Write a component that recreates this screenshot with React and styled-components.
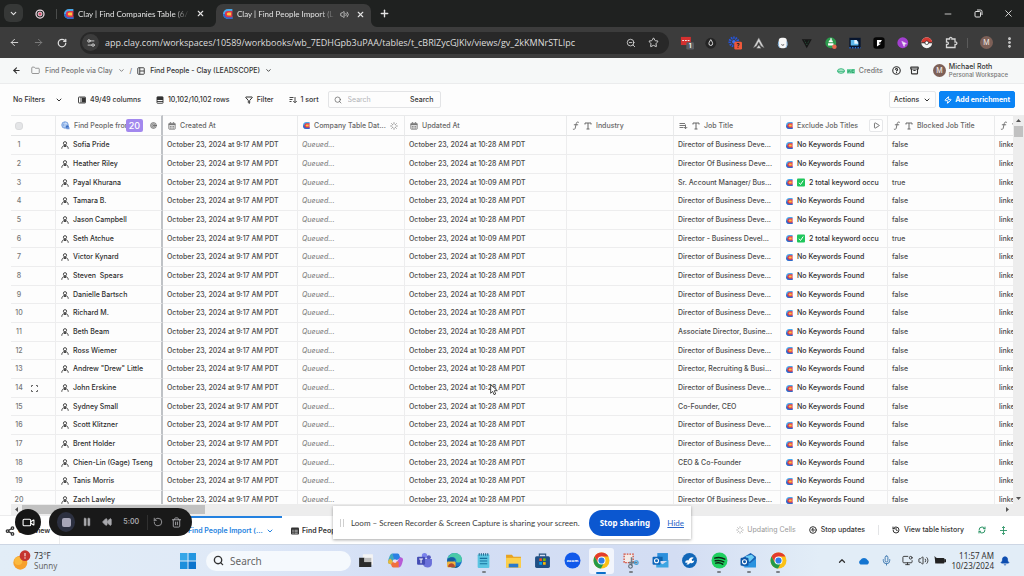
import React from 'react';
import styled, { createGlobalStyle, css } from 'styled-components';
import {
  Archive,
  ArrowLeft,
  ArrowRight,
  Bell,
  ChevronDown,
  ChevronUp,
  CircleHelp,
  CircleStop,
  EllipsisVertical,
  Filter,
  Folder,
  History,
  Loader,
  Mic,
  Minus,
  MonitorDot,
  Pause,
  Play,
  Plus,
  RefreshCw,
  Rewind,
  RotateCcw,
  RotateCw,
  Search,
  Settings2,
  Share2,
  Star,
  Target,
  Trash2,
  Video,
  Volume2,
  X,
  Zap,
  ZoomOut
} from 'lucide-react';

const people = [
  'Sofia Pride',
  'Heather Riley',
  'Payal Khurana',
  'Tamara B.',
  'Jason Campbell',
  'Seth Atchue',
  'Victor Kynard',
  'Steven  Spears',
  'Danielle Bartsch',
  'Richard M.',
  'Beth Beam',
  'Ross Wiemer',
  'Andrew "Drew" Little',
  'John Erskine',
  'Sydney Small',
  'Scott Klitzner',
  'Brent Holder',
  'Chien-Lin (Gage) Tseng',
  'Tanis Morris',
  'Zach Lawley'
];

const jobTitles = {
  1: 'Director Of Business Deve...',
  2: 'Sr. Account Manager/ Bus...',
  5: 'Director - Business Devel...',
  10: 'Associate Director, Busine...',
  12: 'Director, Recruiting & Busi...',
  14: 'Co-Founder, CEO',
  17: 'CEO & Co-Founder',
  19: 'Director Of Business Deve...'
};

const matched = [2, 5];

const rows = people.map((name, i) => ({
  name,
  created: 'October 23, 2024 at 9:17 AM PDT',
  updated: `October 23, 2024 at ${matched.includes(i) ? '10:09' : '10:28'} AM PDT`,
  title: jobTitles[i] || 'Director of Business Deve...',
  matched: matched.includes(i)
}));

const columnWidths = [45, 107, 135, 107, 162, 107, 107, 107, 107, 107];

/* ---------- drawings ---------- */

const ClayLogo = ({ size = 7 }) => (
  <svg width={size} height={size} viewBox="0 0 16 16" aria-hidden="true">
    <path d="M15 0H8a8 8 0 0 0 0 16h7v-4H8V4h7z" fill="#4aa9ea" />
    <path d="M8 16A8 8 0 0 1 0 8h4l4 4h7v4z" fill="#3267c9" />
    <path d="M15 3H8a5 5 0 0 0 0 10h7z" fill="#dc3550" />
    <path d="M13 5.500H8.500a2.500 2.500 0 0 0 0 5H13z" fill="#ffc53a" />
  </svg>
);

const CalendarIcon = () => (
  <svg width="8" height="8" viewBox="0 0 16 16" fill="none" stroke="#777" strokeWidth="1.500">
    <rect x="1.500" y="2.500" width="13" height="12" rx="1.500" fill="#dcdcdc" />
    <path d="M1.500 4.500h13" strokeWidth="3" />
    <path d="M5 0v3M11 0v3M4 9h2M7 9h2M10 9h2M4 12h2M7 12h2M10 12h2" />
  </svg>
);

const FormulaIcon = () => (
  <svg width="8" height="9" viewBox="0 0 16 18" fill="none" stroke="currentColor" strokeWidth="1.800" strokeLinecap="round">
    <path d="M13 2.500c-2.500-1.500-4 0-4.500 2.500L6.500 14c-.5 2.500-2 3.500-4 2.500M4.500 7.500h7" />
  </svg>
);

const TypeIcon = () => (
  <svg width="8" height="8" viewBox="0 0 16 16" fill="none" stroke="currentColor" strokeWidth="2">
    <path d="M2 5V2h12v3M8 2v12M5 14h6" />
  </svg>
);

const PersonIcon = () => (
  <svg width="8" height="8" viewBox="0 0 16 16" fill="none" stroke="#333" strokeWidth="1.800">
    <circle cx="8" cy="4.500" r="3.200" />
    <path d="M1.500 15.500c.3-4.500 3-6.500 6.500-6.500s6.200 2 6.500 6.500M6 10l2 2 2-2" />
  </svg>
);

const ExpandIcon = () => (
  <svg width="7" height="7" viewBox="0 0 14 14" fill="none" stroke="#555" strokeWidth="1.800">
    <path d="M1 4V1h3M10 1h3v3M13 10v3h-3M4 13H1v-3" />
  </svg>
);

const ListArrowIcon = () => (
  <svg width="9" height="8" viewBox="0 0 18 16" fill="none" stroke="currentColor" strokeWidth="1.800">
    <path d="M1 3h11M1 7h11M1 11h8M13 5v8M10 10l3 3.500 3.500-3.500" />
  </svg>
);

const ColumnsIcon = () => (
  <svg width="8" height="8" viewBox="0 0 16 16" fill="none" stroke="#333" strokeWidth="1.800">
    <rect x="1" y="2" width="14" height="12" rx="1" />
    <path d="M6 2v12" />
    <rect x="8" y="3" width="6" height="10" fill="#333" stroke="none" />
  </svg>
);

const RowsIcon = () => (
  <svg width="8" height="8" viewBox="0 0 16 16" fill="none" stroke="#333" strokeWidth="1.800">
    <rect x="2" y="1.500" width="12" height="13" rx="1" />
    <rect x="2" y="2" width="12" height="6" fill="#333" stroke="none" />
    <path d="M2 11h12" />
  </svg>
);

const SortIcon = () => (
  <svg width="8" height="8" viewBox="0 0 16 16" fill="none" stroke="#333" strokeWidth="1.800">
    <path d="M1 3h8M1 7h6M1 11h4M12 2v11M8.500 10l3.500 3.500 3.500-3.500" />
  </svg>
);

const SheetIcon = () => (
  <svg width="8" height="8" viewBox="0 0 16 16" fill="none" stroke="#333" strokeWidth="1.800">
    <rect x="1.500" y="1.500" width="13" height="13" rx="1.500" />
    <path d="M5.500 1.500v13M5.500 8h9" />
  </svg>
);

const GridIcon = () => (
  <svg width="8" height="8" viewBox="0 0 16 16">
    <rect x="0" y="1" width="16" height="14" rx="2" fill="#333" />
    <path d="M2.500 6.500h3M7 6.500h6.500M2.500 9.500h3M7 9.500h6.500M2.500 12.500h3M7 12.500h6.500" stroke="#fff" strokeWidth="1.200" />
  </svg>
);

const GlobePeopleIcon = () => (
  <svg width="9" height="9" viewBox="0 0 18 18">
    <circle cx="8" cy="8" r="6.500" fill="#c8dcf7" stroke="#5f8fd6" strokeWidth="1.600" />
    <path d="M2 8h12M8 2c-4 4-4 8 0 12" stroke="#5f8fd6" fill="none" />
    <circle cx="12.500" cy="12" r="3.500" fill="#3b6fc4" />
    <path d="M11 12.500h6v4h-6z" fill="#7199db" />
  </svg>
);

const CheckEmoji = () => (
  <svg width="8" height="9" viewBox="0 0 16 18" role="img" aria-label="matched">
    <rect x="0" y="1" width="16" height="16" rx="2" fill="#1fc65b" />
    <path d="M4 9.500l3 3.500 5.500-8" stroke="#fff" strokeWidth="2" fill="none" />
  </svg>
);

const CreditsIcon = () => (
  <svg width="19" height="8" viewBox="0 0 38 16">
    <ellipse cx="8" cy="8" rx="7" ry="4.500" fill="#c9f0dc" stroke="#35b57a" strokeWidth="2" />
    <path d="M1.500 8.500h13" stroke="#35b57a" strokeWidth="2" />
    <rect x="20" y="4" width="16" height="9" fill="#6fd3a3" />
    <path d="M22 6v5l3-4 2 4M34 6h-4v5h4" stroke="#1f9a60" strokeWidth="1.500" fill="none" />
  </svg>
);

const SplitRowsIcon = () => (
  <svg width="9" height="9" viewBox="0 0 18 18" fill="none" stroke="#2c9466" strokeWidth="1.800">
    <path d="M9 1v16M2 9h14M6 4l3-3 3 3M6 14l3 3 3-3" />
  </svg>
);

const PuzzleIcon = () => (
  <svg width="13" height="13" viewBox="0 0 26 26" fill="none" stroke="#d6d6d6" strokeWidth="2.600">
    <path d="M3 6h6c-1-4 6-4 5 0h6v6c5-1 5 6 0 5v6H3v-6c5 1 5-6 0-5z" />
  </svg>
);

const TabCorner = ({ flip }) => (
  <svg width="6" height="6" viewBox="0 0 6 6" aria-hidden="true">
    <path d={flip ? 'M0 0a6 6 0 0 0 6 6H0z' : 'M6 0a6 6 0 0 1-6 6h6z'} fill="#3c3c3c" />
  </svg>
);

const PointerIcon = () => (
  <svg width="8" height="12" viewBox="0 0 12 18">
    <path d="M1 1v13l3-3 2 5 2.500-1-2-5H11z" fill="#fff" stroke="#222" strokeWidth="1.200" />
  </svg>
);

const ext = {
  calendar: (
    <>
      <path d="M2 2h22v18H2z" fill="#d4302f" />
      <path d="M5 10h4M11 10h4M17 10h4" stroke="#fff" strokeWidth="2" />
      <rect x="14" y="14" width="17" height="16" rx="3" fill="#5a5d61" />
      <text x="22" y="27" fontSize="13" fontWeight="700" textAnchor="middle" fill="#fff">1</text>
    </>
  ),
  drop: (
    <>
      <circle cx="15" cy="16" r="12" fill="#242424" />
      <path d="M15 8c-3 5-4 6-4 9a4 4 0 0 0 8 0c0-3-1-4-4-9z" fill="none" stroke="#eee" strokeWidth="2" />
    </>
  ),
  dots: (
    <>
      <circle cx="13" cy="13" r="9" fill="none" stroke="#2457e6" strokeWidth="6" strokeDasharray="3 2" />
      <circle cx="13" cy="13" r="4" fill="#3d6cf0" />
      <rect x="14" y="13" width="17" height="17" rx="3" fill="#f0583a" />
      <text x="22" y="26" fontSize="13" fontWeight="700" textAnchor="middle" fill="#222">?</text>
    </>
  ),
  peak: (
    <path d="M3 26L15 4l12 22-7-4-5-9-5 9zM10 27l5-7 5 7" fill="#d6d6d6" stroke="#6c6c6c" />
  ),
  ghost: (
    <>
      <rect x="6" y="4" width="18" height="23" rx="7" fill="#f7f7f7" />
      <path d="M6 12q-3 8 2 14M24 12q3 8-2 14" stroke="#8ec2ee" strokeWidth="2" fill="none" />
      <path d="M12 19q3 3 6 0" stroke="#444" strokeWidth="2" fill="none" />
    </>
  ),
  vee: (
    <>
      <path d="M4 7h22L15 27z" fill="#161616" />
      <path d="M10 10l5 10 5-10" stroke="#2c6b49" strokeWidth="1.500" fill="none" strokeDasharray="2 2" />
    </>
  ),
  android: (
    <>
      <circle cx="15" cy="15" r="12" fill="#2c9b4d" />
      <path d="M9 16h12v5H9zM10 14a5 5 0 0 1 10 0zM14 5h3v6h-3z" fill="#fff" />
      <circle cx="23" cy="24" r="5" fill="#e8684f" />
    </>
  ),
  screen: (
    <>
      <rect x="3" y="4" width="25" height="23" fill="#07152e" />
      <path d="M6 17V9h13l4 4v8H6z" fill="#5cb7ea" />
      <path d="M14 9h5l4 8h-9z" fill="#eaf6ff" />
      <path d="M3 26h25" stroke="#2e6fd1" strokeWidth="3" strokeDasharray="3 3" />
    </>
  ),
  flag: (
    <>
      <rect x="3" y="3" width="25" height="25" rx="6" fill="#050505" />
      <path d="M11 9h11l-3 5h-3v3h4l-9 6z" fill="#fff" />
    </>
  ),
  violet: (
    <>
      <circle cx="15" cy="15" r="12" fill="#a33fd0" />
      <path d="M13 12l10 5-4 1-1 5z" fill="#fff" stroke="#e0c6f0" strokeWidth="2" />
    </>
  ),
  ball: (
    <>
      <circle cx="15" cy="15" r="12" fill="#f3f3f3" />
      <path d="M3 15a12 12 0 0 1 24 0z" fill="#d63a33" />
      <path d="M3 15h24" stroke="#222" strokeWidth="2" />
      <circle cx="15" cy="15" r="4" fill="#fff" stroke="#222" strokeWidth="1.500" />
    </>
  )
};

const ChromeArt = () => (
  <>
    <circle cx="16" cy="16" r="15" fill="#fbc116" />
    <path d="M3 8.500A15 15 0 0 0 15 31l6.500-12L9.500 20z" fill="#249a48" />
    <path d="M3 8.500a15 15 0 0 1 26 0H16L9 19z" fill="#e33b2e" />
    <circle cx="16" cy="16" r="7.500" fill="#fff" />
    <circle cx="16" cy="16" r="5.800" fill="#2f7de9" />
  </>
);

const apps = [
  {
    name: 'Task view',
    art: (
      <>
        <rect x="11" y="4" width="19" height="20" rx="1" fill="#f4f4f4" />
        <path d="M4 11h10v8h13v9H4z" fill="#2b2b2b" />
        <path d="M14 11h13v8H14z" fill="#bdbdbd" />
      </>
    )
  },
  {
    name: 'Copilot',
    art: (
      <>
        <path d="M10 3h10c4 0 3 6 6 8l-9 5-8-3z" fill="#2b80e4" />
        <path d="M10 3C6 3 4 10 2 17c-1 4 2 6 6 6l5-11z" fill="#3fa9c0" />
        <path d="M22 29c5 0 6-6 8-13 1-4-2-6-6-6l-6 10z" fill="#b75bd6" />
        <path d="M22 29H12c-4 0-3-6-6-7l9-6 7 3z" fill="#f0703e" />
        <path d="M2 17c-1 4 2 6 6 6l3-6-5-5z" fill="#e9b83a" />
        <path d="M13 14h4l2 2-2 4h-4l-2-2z" fill="#eddff2" />
      </>
    )
  },
  {
    name: 'Teams',
    art: (
      <>
        <circle cx="24" cy="10" r="4" fill="#5559c0" />
        <circle cx="16" cy="7" r="5" fill="#7b83eb" />
        <path d="M12 13h18v9q-1 7-8 7t-9-6z" fill="#6a70d9" />
        <rect x="2" y="9" width="15" height="15" rx="2" fill="#444cb4" />
        <path d="M6 13h7M9.500 13v8" stroke="#fff" strokeWidth="2" />
      </>
    )
  },
  {
    name: 'Edge',
    art: (
      <>
        <circle cx="16" cy="16" r="14" fill="#1a78c9" />
        <path d="M3 13C5 5 11 2 17 2c8 0 14 7 13 13-1 5-7 6-11 4 2-5-2-9-7-9-4 0-7 2-9 3z" fill="#4ac9a8" />
        <path d="M3 13c6-6 15-3 14 2-4 0-4 7 2 11 4 1 7 0 9-3-4 7-13 9-19 5-5-3-8-9-6-15z" fill="#155e9d" />
        <rect x="2" y="18" width="16" height="11" rx="2" fill="#f1b53d" />
        <path d="M4 28c0-9 12-9 13 0z" fill="#b44b31" />
      </>
    )
  },
  {
    name: 'Notepad',
    running: true,
    art: (
      <>
        <rect x="5" y="4" width="22" height="26" rx="2" fill="#5cc5e2" />
        <path d="M8 2v5M12 2v5M16 2v5M20 2v5M24 2v5" stroke="#1a5b82" strokeWidth="1.600" />
        <path d="M9 12h14M9 17h14M9 22h14" stroke="#16719d" strokeWidth="2" />
      </>
    )
  },
  {
    name: 'File Explorer',
    art: (
      <>
        <path d="M2 5h11l3 4h14v20H2z" fill="#e7a221" />
        <path d="M2 11h28v18H2z" fill="#fcd04b" />
        <path d="M7 29v-7h18v7z" fill="#2a79cc" />
      </>
    )
  },
  {
    name: 'Store',
    art: (
      <>
        <path d="M10 9V4h12v5" stroke="#25507d" strokeWidth="2" fill="none" />
        <rect x="2" y="8" width="28" height="22" rx="3" fill="#1f4f85" />
        <path d="M10 12h5v5h-5z" fill="#f25022" />
        <path d="M17 12h5v5h-5z" fill="#7fba00" />
        <path d="M10 19h5v5h-5z" fill="#00a4ef" />
        <path d="M17 19h5v5h-5z" fill="#ffb900" />
      </>
    )
  },
  {
    name: 'Zoom',
    art: (
      <>
        <circle cx="16" cy="16" r="15" fill="#1159ea" />
        <text x="16" y="19" fontSize="8" fontWeight="700" textAnchor="middle" fill="#fff">zoom</text>
      </>
    )
  },
  { name: 'Chrome', active: true, art: <ChromeArt /> },
  {
    name: 'Snipping Tool',
    running: true,
    art: (
      <>
        <rect x="4" y="4" width="17" height="16" fill="#f3ebe8" stroke="#d34f3e" strokeWidth="2.500" strokeDasharray="3 2" />
        <path d="M18 10v16M13 20h16" stroke="#6c7b88" strokeWidth="3" />
        <circle cx="16" cy="27" r="3.500" fill="none" stroke="#5b6975" strokeWidth="2" />
        <circle cx="27" cy="20" r="3.500" fill="none" stroke="#3aa0dc" strokeWidth="2" />
      </>
    )
  },
  {
    name: 'Outlook',
    art: (
      <>
        <path d="M10 2h20v15H10z" fill="#2c8fdc" />
        <path d="M10 9h10v8H10z" fill="#1162a8" />
        <path d="M8 16l12 7 11-8v14H8z" fill="#3da5e2" />
        <rect x="1" y="9" width="15" height="15" rx="2" fill="#0f66ba" />
        <circle cx="8.500" cy="16.500" r="3.800" fill="none" stroke="#fff" strokeWidth="2" />
      </>
    )
  },
  {
    name: 'Support',
    art: (
      <>
        <circle cx="16" cy="16" r="14" fill="#1267b8" />
        <path d="M8 20c0-4 3-5 6-4 2-6 7-7 10-5l-4 3 1 3 4-1c-1 5-5 6-8 4-1 3-4 4-7 3l3-3z" fill="#fff" />
      </>
    )
  },
  {
    name: 'Spotify',
    running: true,
    art: (
      <>
        <circle cx="16" cy="16" r="15" fill="#1fcf5f" />
        <path d="M7 11.500q10-3 19 2M8 16.500q9-2 16 2M9 21q7-2 13 2" stroke="#0c2414" strokeWidth="2.800" fill="none" strokeLinecap="round" />
      </>
    )
  },
  {
    name: 'Outlook (new)',
    running: true,
    art: (
      <>
        <path d="M5 11L20 2l10 7v18H5z" fill="#1b62b5" />
        <path d="M10 8l12-3 5 5-9 9z" fill="#6ccdf5" />
        <path d="M8 17l11 4 11-9v17H8z" fill="#2a93e0" />
        <rect x="1" y="11" width="15" height="15" rx="2" fill="#0e57a8" />
        <circle cx="8.500" cy="18.500" r="3.800" fill="none" stroke="#fff" strokeWidth="2" />
      </>
    )
  },
  { name: 'Chrome profile', running: true, art: <ChromeArt /> }
];

/* ---------- page ---------- */

const GlobalStyle = createGlobalStyle`
  * {
    box-sizing: border-box;
  }

  body {
    margin: 0;
    background: #fdfdfd;
    color: #333;
    font-family: Inter, 'Liberation Sans', sans-serif;
    font-size: 7px;
    line-height: 10px;
  }

  button,
  input {
    margin: 0;
    padding: 0;
    border: 0;
    background: none;
    color: inherit;
    font: inherit;
  }

  svg {
    display: block;
    flex-shrink: 0;
  }
`;

const Page = styled.div`
  display: flex;
  flex-direction: column;
  height: 100vh;
  overflow: hidden;
  position: relative;
`;

const IconButton = styled.button`
  display: flex;
  align-items: center;
  justify-content: center;
  flex-shrink: 0;
  width: ${props => props.$width || 16}px;
  height: 16px;
  color: ${props => props.$color || 'inherit'};
`;

/* browser window */

const TabStrip = styled.header`
  display: flex;
  align-items: flex-end;
  height: 27px;
  padding-left: 4px;
  background: #1f2120;
  color: #e3e3e3;
  font-family: Lato, 'Open Sans', sans-serif;
  font-size: 8px;
`;

const TabSearch = styled.button`
  display: grid;
  place-items: center;
  width: 19px;
  height: 18px;
  margin-bottom: 5px;
  border-radius: 6px;
  background: #363837;
`;

const PinnedTab = styled.button`
  display: grid;
  place-items: center;
  width: 33px;
  height: 27px;
`;

const StripDivider = styled.span`
  width: 1px;
  height: ${props => props.$height || 10}px;
  margin: ${props => props.$margin || '0'};
  background: ${props => props.$color || '#4a4c4b'};
`;

const BrowserTab = styled.div`
  display: flex;
  align-items: center;
  gap: 4px;
  width: ${props => (props.$active ? 155 : 153)}px;
  height: ${props => (props.$active ? 23 : 27)}px;
  padding: 0 4px ${props => (props.$active ? 3 : 0)}px 7px;
  border-radius: 7px 7px 0 0;
  background: ${props => (props.$active ? '#3c3c3c' : 'transparent')};

  a {
    flex: 1;
    overflow: hidden;
    color: inherit;
    text-decoration: none;
    white-space: nowrap;
    mask-image: linear-gradient(to right, #000 85%, transparent);
  }
`;

const NewTab = styled.button`
  display: grid;
  place-items: center;
  width: 14px;
  height: 27px;
`;

const WindowControls = styled.div`
  display: flex;
  align-items: center;
  gap: 14px;
  height: 27px;
  margin-left: auto;
  padding-right: 8px;
`;

const AddressBar = styled.nav`
  display: flex;
  align-items: center;
  height: 31px;
  padding: 0 7px 0 6px;
  background: #3c3c3c;
  color: #dedede;
`;

const NavButtons = styled.div`
  display: flex;
  gap: 8px;
  margin-right: 10px;
`;

const UrlField = styled.div`
  display: flex;
  flex: 1;
  align-items: center;
  gap: 6px;
  height: 22px;
  padding: 0 8px 0 2px;
  border-radius: 11px;
  background: #282828;

  input {
    flex: 1;
    min-width: 0;
    font-family: 'Open Sans', 'Noto Sans', sans-serif;
    font-size: 9px;
  }
`;

const SiteInfo = styled.button`
  display: grid;
  place-items: center;
  width: 17px;
  height: 17px;
  border-radius: 50%;
  background: #3c3c3c;
`;

const Extensions = styled.div`
  display: flex;
  align-items: center;
  gap: 8px;
  margin-left: 10px;
`;

const Avatar = styled.span`
  display: grid;
  place-items: center;
  width: 13px;
  height: 13px;
  margin-left: ${props => props.$indent || 0}px;
  border-radius: 50%;
  background: #7d6057;
  color: #f3eae6;
  font-size: 7px;
`;

/* clay header */

const AppHeader = styled.header`
  display: flex;
  align-items: center;
  justify-content: space-between;
  height: 26px;
  padding: 0 16px 0 11px;
  border-bottom: 1px solid #ebeced;
  background: #f6f8f8;
  font-weight: 500;
`;

const Crumbs = styled.div`
  display: flex;
  align-items: center;
  gap: 5px;
  white-space: nowrap;

  a {
    color: inherit;
    text-decoration: none;
  }
`;

const ParentCrumb = styled(Crumbs)`
  margin-left: 5px;
  color: #777;
`;

const Account = styled.div`
  display: flex;
  align-items: center;
  gap: 9px;
`;

const Credits = styled.span`
  display: flex;
  align-items: center;
  gap: 3px;
  color: #777;
`;

const Profile = styled.div`
  display: flex;
  align-items: center;
  gap: 3px;
  margin-left: 5px;
  line-height: 8px;

  p {
    margin: 0;
    color: #777;
    font-size: 6px;
  }

  strong {
    display: block;
    color: #333;
    font-size: 7px;
    font-weight: 500;
  }
`;

const Toolbar = styled.div`
  display: flex;
  align-items: center;
  gap: 15px;
  height: 31px;
  padding: 0 9px 0 13px;
  white-space: nowrap;
`;

const ToolButton = styled.button`
  display: flex;
  align-items: center;
  gap: ${props => props.$gap || 4}px;
  font-weight: 500;
`;

const SearchBox = styled.form`
  display: flex;
  align-items: center;
  gap: 6px;
  width: 113px;
  height: 17px;
  margin-left: -6px;
  padding: 0 6px 0 5px;
  border: 1px solid #e3e4e6;
  border-radius: 2px;
  color: #555;

  input {
    flex: 1;
    min-width: 0;
  }

  input::placeholder {
    color: #b3b5b8;
    opacity: 1;
  }

  button {
    color: #333;
    font-weight: 500;
  }
`;

const Actions = styled.div`
  display: flex;
  gap: 3px;
  margin-left: auto;
`;

const ActionButton = styled.button`
  display: flex;
  align-items: center;
  justify-content: center;
  gap: 4px;
  height: 17px;
  padding: 0 4px;
  border: 1px solid #e6e7e9;
  border-radius: 2px;
  font-weight: 500;

  ${props =>
    props.$primary &&
    css`
      gap: 3px;
      border-color: #0a84f5;
      background: #0a84f5;
      color: #fff;
      font-weight: 700;
    `}
`;

/* table */

const TableArea = styled.main`
  display: grid;
  grid-template-columns: 1fr 11px;
  grid-template-rows: 1fr 11px;
  flex: 1;
  min-height: 0;
  padding-left: 11px;
`;

const TableClip = styled.div`
  min-width: 0;
  overflow: hidden;
`;

const Table = styled.table`
  width: 1091px;
  border-collapse: separate;
  border-spacing: 0;
  table-layout: fixed;
`;

const HeadCell = styled.th`
  height: 21px;
  padding: 0 4px;
  border-top: 1px solid #e9eaeb;
  border-right: ${props => (props.$pinned ? '2px solid #bfc2c6' : '1px solid #e9eaeb')};
  border-bottom: 1px solid #e3e4e5;
  color: #666;
  font-weight: 500;
  text-align: left;
`;

const HeadLabel = styled.div`
  display: flex;
  align-items: center;
  gap: 4px;
  padding-left: 1px;
  white-space: nowrap;
`;

const FirstColumnTitle = styled.span`
  flex: 1;
  overflow: hidden;
`;

const CountBadge = styled.b`
  width: 17px;
  height: 13px;
  margin: 0 3px 0 -4px;
  border-radius: 2px;
  background: #a288ee;
  color: #fff;
  font-size: 9px;
  font-weight: 500;
  line-height: 13px;
  text-align: center;
`;

const RunButton = styled.button`
  display: grid;
  place-items: center;
  width: 14px;
  height: 13px;
  margin-left: auto;
  border: 1px solid #e6e7e9;
  border-radius: 2px;
  background: #fff;
`;

const SelectAll = styled.input`
  display: block;
  appearance: none;
  width: 8px;
  height: 8px;
  border: 1px solid #d9dadc;
  border-radius: 3px;
  background: #e4e5e7;
`;

const Row = styled.tr`
  height: 19px;

  &:nth-child(3n) {
    height: 18px;
  }
`;

const Cell = styled.td`
  padding: 0 4px;
  overflow: hidden;
  border-right: ${props => (props.$pinned ? '2px solid #bfc2c6' : '1px solid #ededee')};
  border-bottom: 1px solid #ededee;
  color: ${props => props.$color || '#4c4c4c'};
  font-style: ${props => (props.$italic ? 'italic' : 'normal')};
  font-weight: 500;
  white-space: pre;
`;

const CellContent = styled.div`
  display: flex;
  align-items: center;
  gap: 4px;
  padding-left: 1px;
  color: #2d2d2d;
`;

const RowNumber = styled.div`
  display: flex;
  align-items: center;
  gap: 8px;
  color: #777;

  span {
    display: flex;
    justify-content: center;
    width: 8px;
  }
`;

const ScrollTrack = styled.div`
  display: flex;
  flex-direction: ${props => (props.$vertical ? 'column' : 'row')};
  align-items: center;
  background: #ededed;
`;

const ScrollArrow = styled.button`
  display: grid;
  place-items: center;
  width: 11px;
  height: 11px;
  margin: ${props => (props.$end ? 'auto 0 0 auto' : '0')};
  color: #555;
`;

const ScrollThumb = styled.div`
  width: ${props => (props.$vertical ? '9px' : '183px')};
  height: ${props => (props.$vertical ? '11px' : '9px')};
  background: #c1c1c1;
`;

/* footer */

const SheetBar = styled.footer`
  display: flex;
  align-items: stretch;
  height: 29px;
  padding-right: 16px;
  border-top: 1px solid #ececed;
  background: #fff;
`;

const SheetTab = styled.button`
  display: flex;
  align-items: center;
  gap: 3px;
  width: ${props => props.$width}px;
  padding: 0 ${props => props.$pad || 5}px;
  overflow: hidden;
  border-top: 2px solid ${props => (props.$active ? '#2381e0' : 'transparent')};
  border-right: ${props => (props.$divided ? '1px solid #ececed' : '0')};
  color: ${props => (props.$active ? '#2381e0' : '#333')};
  font-weight: 600;
  white-space: nowrap;

  span {
    flex-shrink: 0;
  }
`;

const SheetStatus = styled.div`
  display: flex;
  align-items: center;
  gap: 13px;
  margin-left: auto;
`;

const StatusText = styled.span`
  display: flex;
  align-items: center;
  gap: 3px;
  color: #999;
`;

/* overlays */

const CameraBubble = styled.button`
  position: absolute;
  bottom: 41px;
  left: 15px;
  display: grid;
  place-items: center;
  width: 26px;
  height: 26px;
  border-radius: 50%;
  background: #151515;
  color: #fff;
`;

const RecorderPill = styled.div`
  position: absolute;
  bottom: 40px;
  left: 49px;
  display: flex;
  align-items: center;
  gap: 4px;
  width: 143px;
  height: 28px;
  padding: 0 8px;
  border-radius: 14px;
  background: #191919;
  color: #a9a9ad;

  time {
    width: 26px;
    font-weight: 600;
    text-align: center;
  }
`;

const StopRecording = styled.button`
  display: grid;
  place-items: center;
  width: 20px;
  height: 20px;
  border-radius: 50%;
  background: #2c3040;

  &::before {
    width: 9px;
    height: 9px;
    border-radius: 2px;
    background: #a7a6b8;
    content: '';
  }
`;

const ShareNotice = styled.div`
  position: absolute;
  bottom: 37px;
  left: 50%;
  display: flex;
  align-items: center;
  width: 358px;
  height: 33px;
  margin-left: -179px;
  padding: 0 7px;
  background: #fff;
  box-shadow: 0 1px 3px rgba(0, 0, 0, 0.35);
  color: #3c3c3c;
  font-family: Lato, 'Open Sans', sans-serif;
  font-size: 8px;
  white-space: nowrap;

  p {
    flex: 1;
    margin: 0 0 0 7px;
  }

  a {
    margin-left: 7px;
    color: #2a64c8;
  }
`;

const DragHandle = styled.span`
  width: 4px;
  height: 8px;
  border: solid #cfcfcf;
  border-width: 0 1px;
`;

const StopSharing = styled.button`
  flex-shrink: 0;
  width: 71px;
  height: 26px;
  border-radius: 13px;
  background: #0b57d0;
  color: #fff;
  font-family: 'Noto Sans', 'Open Sans', sans-serif;
  font-weight: 700;
`;

const Pointer = styled.div`
  position: absolute;
  top: 384px;
  left: 490px;
`;

/* windows taskbar */

const Taskbar = styled.footer`
  display: flex;
  align-items: center;
  height: 32px;
  padding: 0 14px 0 13px;
  border-top: 1px solid #cdd6e4;
  background: linear-gradient(to right, #e2edf7 0%, #dfe9f7 22%, #d3def5 40%, #d3ddf3 66%, #e2edf7 80%);
  color: #333;
  font-family: 'Noto Sans', 'Open Sans', sans-serif;
  font-size: 8px;
`;

const Weather = styled.button`
  display: flex;
  flex-shrink: 0;
  align-items: center;
  gap: 3px;
  width: 167px;
  text-align: left;

  small {
    display: block;
    color: #666;
    font-size: 8px;
  }
`;

const TaskSearch = styled.label`
  display: flex;
  flex-shrink: 0;
  align-items: center;
  gap: 6px;
  width: 145px;
  height: 20px;
  margin-left: 10px;
  padding: 0 7px;
  border-radius: 10px;
  background: #f5f9fd;

  input {
    flex: 1;
    min-width: 0;
    font-size: 10px;
  }

  input::placeholder {
    color: #666;
    opacity: 1;
  }
`;

const AppList = styled.div`
  display: flex;
  flex-shrink: 0;
  width: 442px;
`;

const AppButton = styled.button`
  display: grid;
  position: relative;
  place-items: center;
  flex: 1;
  height: 26px;

  &::before {
    position: absolute;
    inset: 0 2px;
    border-radius: 3px;
    background: ${props => (props.$active ? 'rgba(255, 255, 255, 0.7)' : 'transparent')};
    content: '';
  }

  &::after {
    position: absolute;
    bottom: ${props => (props.$active ? 0 : 1)}px;
    width: ${props => (props.$active ? 10 : 4)}px;
    height: 2px;
    border-radius: 1px;
    background: ${props => (props.$active ? '#0b6fc9' : props.$running ? '#7c8087' : 'transparent')};
    content: '';
  }

  svg {
    position: relative;
  }
`;

const Tray = styled.div`
  display: flex;
  align-items: center;
  gap: ${props => props.$gap || 5}px;
  margin-left: auto;
  padding-right: ${props => props.$end || 0}px;
  text-align: right;
`;

function BrowserChrome() {
  return (
    <>
      <TabStrip>
        <TabSearch aria-label="Search tabs">
          <ChevronDown size={9} strokeWidth={3} />
        </TabSearch>
        <PinnedTab aria-label="Recording">
          <svg width="10" height="10" viewBox="0 0 20 20">
            <circle cx="10" cy="10" r="8" fill="none" stroke="#efdce6" strokeWidth="2.500" />
            <circle cx="10" cy="10" r="4" fill="#d8506f" stroke="#fff" strokeWidth="1.500" />
          </svg>
        </PinnedTab>
        <StripDivider $margin="0 0 8px" />
        <BrowserTab>
          <ClayLogo size={10} />
          <a href="#companies">Clay | Find Companies Table (6/</a>
          <IconButton aria-label="Close tab" $width={12}>
            <X size={9} strokeWidth={3} />
          </IconButton>
        </BrowserTab>
        <TabCorner />
        <BrowserTab $active>
          <ClayLogo size={10} />
          <a href="#people">Clay | Find People Import (L</a>
          <IconButton aria-label="Mute tab" $width={10}>
            <Volume2 size={9} />
          </IconButton>
          <IconButton aria-label="Close tab" $width={14}>
            <X size={9} strokeWidth={3} />
          </IconButton>
        </BrowserTab>
        <TabCorner flip />
        <NewTab aria-label="New tab">
          <Plus size={11} strokeWidth={3} />
        </NewTab>
        <WindowControls>
          <IconButton aria-label="Minimize">
            <Minus size={10} strokeWidth={2} />
          </IconButton>
          <IconButton aria-label="Restore">
            <svg width="9" height="9" viewBox="0 0 18 18" fill="none" stroke="currentColor" strokeWidth="2">
              <rect x="2" y="5" width="11" height="11" rx="2" />
              <path d="M6 2h7q3 0 3 3v7" />
            </svg>
          </IconButton>
          <IconButton aria-label="Close window">
            <X size={11} strokeWidth={2} />
          </IconButton>
        </WindowControls>
      </TabStrip>
      <AddressBar>
        <NavButtons>
          <IconButton aria-label="Back">
            <ArrowLeft size={11} />
          </IconButton>
          <IconButton aria-label="Forward" $color="#7f7f7f">
            <ArrowRight size={11} />
          </IconButton>
          <IconButton aria-label="Reload">
            <RotateCw size={10} strokeWidth={3} />
          </IconButton>
        </NavButtons>
        <UrlField>
          <SiteInfo aria-label="Site information">
            <Settings2 size={10} />
          </SiteInfo>
          <input
            aria-label="Address"
            defaultValue="app.clay.com/workspaces/10589/workbooks/wb_7EDHGpb3uPAA/tables/t_cBRlZycGJKlv/views/gv_2kKMNrSTLIpc"
          />
          <IconButton aria-label="Zoom">
            <ZoomOut size={10} strokeWidth={2} />
          </IconButton>
          <IconButton aria-label="Bookmark">
            <Star size={11} strokeWidth={2} />
          </IconButton>
        </UrlField>
        <Extensions>
          {Object.keys(ext).map(name => (
            <IconButton key={name} aria-label={name}>
              <svg width="14" height="14" viewBox="0 0 31 31">
                {ext[name]}
              </svg>
            </IconButton>
          ))}
          <IconButton aria-label="Extensions">
            <PuzzleIcon />
          </IconButton>
          <StripDivider $color="#5b5b5b" />
          <Avatar $indent={4}>M</Avatar>
          <IconButton aria-label="Menu">
            <EllipsisVertical size={13} strokeWidth={3} />
          </IconButton>
        </Extensions>
      </AddressBar>
    </>
  );
}

function WorkspaceHeader() {
  return (
    <>
      <AppHeader>
        <Crumbs>
          <IconButton aria-label="Back" $width={10}>
            <ArrowLeft size={9} strokeWidth={3} />
          </IconButton>
          <ParentCrumb>
            <Folder size={9} strokeWidth={2} />
            <a href="#workbook">Find People via Clay</a>
            <ChevronDown size={7} strokeWidth={3} />
            <span>/</span>
          </ParentCrumb>
          <SheetIcon />
          <a href="#table">Find People - Clay (LEADSCOPE)</a>
          <ChevronDown size={7} strokeWidth={3} />
        </Crumbs>
        <Account>
          <Credits>
            <CreditsIcon />
            Credits
          </Credits>
          <IconButton aria-label="Help" $width={9}>
            <CircleHelp size={9} strokeWidth={3} />
          </IconButton>
          <IconButton aria-label="Archive" $width={9}>
            <Archive size={9} strokeWidth={3} />
          </IconButton>
          <Profile>
            <Avatar>M</Avatar>
            <p>
              <strong>Michael Roth</strong>
              Personal Workspace
            </p>
          </Profile>
        </Account>
      </AppHeader>
      <Toolbar>
        <ToolButton $gap={10}>
          No Filters
          <ChevronDown size={8} strokeWidth={3} />
        </ToolButton>
        <ToolButton>
          <ColumnsIcon />
          49/49 columns
        </ToolButton>
        <ToolButton>
          <RowsIcon />
          10,102/10,102 rows
        </ToolButton>
        <ToolButton>
          <Filter size={8} strokeWidth={3} />
          Filter
        </ToolButton>
        <ToolButton>
          <SortIcon />1 sort
        </ToolButton>
        <SearchBox>
          <Search size={8} />
          <input aria-label="Search rows" placeholder="Search" />
          <button type="button">Search</button>
        </SearchBox>
        <Actions>
          <ActionButton>
            Actions
            <ChevronDown size={8} strokeWidth={3} />
          </ActionButton>
          <ActionButton $primary>
            <Zap size={8} strokeWidth={3} />
            Add enrichment
          </ActionButton>
        </Actions>
      </Toolbar>
    </>
  );
}

function PeopleTable() {
  return (
    <Table>
      <colgroup>
        {columnWidths.map((width, i) => (
          <col key={i} style={{ width }} />
        ))}
      </colgroup>
      <thead>
        <tr>
          <HeadCell>
            <SelectAll type="checkbox" aria-label="Select all rows" />
          </HeadCell>
          <HeadCell $pinned>
            <HeadLabel>
              <GlobePeopleIcon />
              <FirstColumnTitle>Find People from</FirstColumnTitle>
              <CountBadge>20</CountBadge>
              <Target size={7} strokeWidth={3} />
            </HeadLabel>
          </HeadCell>
          <HeadCell>
            <HeadLabel>
              <CalendarIcon />
              Created At
            </HeadLabel>
          </HeadCell>
          <HeadCell>
            <HeadLabel>
              <ClayLogo />
              Company Table Dat...
              <Loader size={8} />
            </HeadLabel>
          </HeadCell>
          <HeadCell>
            <HeadLabel>
              <CalendarIcon />
              Updated At
            </HeadLabel>
          </HeadCell>
          <HeadCell>
            <HeadLabel>
              <FormulaIcon />
              <TypeIcon />
              Industry
            </HeadLabel>
          </HeadCell>
          <HeadCell>
            <HeadLabel>
              <ListArrowIcon />
              <TypeIcon />
              Job Title
            </HeadLabel>
          </HeadCell>
          <HeadCell>
            <HeadLabel>
              <ClayLogo />
              Exclude Job Titles
              <RunButton aria-label="Run column">
                <Play size={7} strokeWidth={3} />
              </RunButton>
            </HeadLabel>
          </HeadCell>
          <HeadCell>
            <HeadLabel>
              <FormulaIcon />
              <TypeIcon />
              Blocked Job Title
            </HeadLabel>
          </HeadCell>
          <HeadCell>
            <HeadLabel>
              <FormulaIcon />
              <TypeIcon />
            </HeadLabel>
          </HeadCell>
        </tr>
      </thead>
      <tbody>
        {rows.map((row, i) => (
          <Row key={row.name}>
            <Cell>
              <RowNumber>
                <span>{i + 1}</span>
                {i === 13 && <ExpandIcon />}
              </RowNumber>
            </Cell>
            <Cell $pinned>
              <CellContent>
                <PersonIcon />
                {row.name}
              </CellContent>
            </Cell>
            <Cell>{row.created}</Cell>
            <Cell $italic $color="#888">
              Queued...
            </Cell>
            <Cell>{row.updated}</Cell>
            <Cell />
            <Cell>{row.title}</Cell>
            <Cell>
              <CellContent>
                <ClayLogo />
                {row.matched && <CheckEmoji />}
                {row.matched ? '2 total keyword occu' : 'No Keywords Found'}
              </CellContent>
            </Cell>
            <Cell>{row.matched ? 'true' : 'false'}</Cell>
            <Cell>linke</Cell>
          </Row>
        ))}
      </tbody>
    </Table>
  );
}

const Arrow = ({ d }) => (
  <svg width="5" height="5" viewBox="0 0 10 10" fill="currentColor">
    <path d={d} />
  </svg>
);

function Recorder() {
  return (
    <>
      <CameraBubble aria-label="Camera">
        <Video size={13} />
      </CameraBubble>
      <RecorderPill>
        <StopRecording aria-label="Stop recording" />
        <IconButton aria-label="Pause">
          <Pause size={10} fill="currentColor" strokeWidth={1} />
        </IconButton>
        <IconButton aria-label="Rewind">
          <Rewind size={10} fill="currentColor" />
        </IconButton>
        <time>5:00</time>
        <StripDivider $height={15} $color="#303030" />
        <IconButton aria-label="Restart" $width={12}>
          <RotateCcw size={10} />
        </IconButton>
        <IconButton aria-label="Delete">
          <Trash2 size={11} />
        </IconButton>
      </RecorderPill>
      <ShareNotice>
        <DragHandle />
        <p>Loom – Screen Recorder &amp; Screen Capture is sharing your screen.</p>
        <StopSharing>Stop sharing</StopSharing>
        <a href="#hide">Hide</a>
      </ShareNotice>
    </>
  );
}

function WindowsTaskbar() {
  return (
    <Taskbar>
      <Weather>
        <svg width="18" height="21" viewBox="0 0 54 63">
          <circle cx="22" cy="38" r="21" fill="#f6a02c" />
          <circle cx="16" cy="33" r="12" fill="#fbb93f" />
          <circle cx="36" cy="17" r="16" fill="#c5352f" />
          <path d="M36 9v10M36 22v4" stroke="#fff" strokeWidth="3" />
        </svg>
        <span>
          73°F
          <small>Sunny</small>
        </span>
      </Weather>
      <IconButton aria-label="Start">
        <svg width="16" height="16" viewBox="0 0 32 32">
          <path d="M0 0h15v15H0z" fill="#35a6e8" />
          <path d="M17 0h15v15H17z" fill="#2396e0" />
          <path d="M0 17h15v15H0z" fill="#1d8fdc" />
          <path d="M17 17h15v15H17z" fill="#0c74cc" />
        </svg>
      </IconButton>
      <TaskSearch>
        <Search size={11} strokeWidth={3} />
        <input aria-label="Search" placeholder="Search" />
      </TaskSearch>
      <AppList>
        {apps.map(app => (
          <AppButton key={app.name} aria-label={app.name} $active={app.active} $running={app.running}>
            <svg width="17" height="17" viewBox="0 0 32 32">
              {app.art}
            </svg>
          </AppButton>
        ))}
      </AppList>
      <Tray>
        <Tray $gap={11} $end={5}>
          <ChevronUp size={10} strokeWidth={3} />
          <svg width="12" height="8" viewBox="0 0 24 16">
            <path d="M5 15a5 5 0 0 1 0-9A8 8 0 0 1 19 6a5 5 0 0 1 0 9z" fill="#1475d1" />
          </svg>
          <Mic size={11} color="#3673ad" />
        </Tray>
        <MonitorDot size={11} />
        <Volume2 size={11} />
        <svg width="12" height="9" viewBox="0 0 24 18">
          <rect x="3" y="4" width="18" height="11" rx="2" fill="#222" />
          <path d="M21 7h3v5h-3zM1 1l6 5-4 9" stroke="#222" fill="#222" />
        </svg>
        <Tray $gap={6}>
          <span>
            11:57 AM
            <br />
            10/23/2024
          </span>
          <Bell size={10} color="#0d4db0" fill="#0d4db0" />
        </Tray>
      </Tray>
    </Taskbar>
  );
}

function App() {
  return (
    <Page>
      <GlobalStyle />
      <BrowserChrome />
      <WorkspaceHeader />
      <TableArea>
        <TableClip>
          <PeopleTable />
        </TableClip>
        <ScrollTrack $vertical>
          <ScrollArrow aria-label="Scroll up">
            <Arrow d="M0 8l5-6 5 6z" />
          </ScrollArrow>
          <ScrollThumb $vertical />
          <ScrollArrow aria-label="Scroll down" $end>
            <Arrow d="M0 2l5 6 5-6z" />
          </ScrollArrow>
        </ScrollTrack>
        <ScrollTrack>
          <ScrollArrow aria-label="Scroll left">
            <Arrow d="M8 0L2 5l6 5z" />
          </ScrollArrow>
          <ScrollThumb />
          <ScrollArrow aria-label="Scroll right" $end>
            <Arrow d="M2 0l6 5-6 5z" />
          </ScrollArrow>
        </ScrollTrack>
        <ScrollTrack />
      </TableArea>
      <SheetBar>
        <SheetTab $width={60} $divided>
          <Share2 size={10} strokeWidth={3} />
          <span>Overview</span>
        </SheetTab>
        <SheetTab $width={112} aria-label="Companies">
          <GridIcon />
        </SheetTab>
        <SheetTab $width={110} $active>
          <GridIcon />
          <span>Find People Import (...</span>
          <ChevronDown size={8} strokeWidth={3} />
        </SheetTab>
        <SheetTab $width={110} $pad={9}>
          <GridIcon />
          <span>Find People</span>
        </SheetTab>
        <SheetStatus>
          <StatusText>
            <Loader size={8} />
            Updating Cells
          </StatusText>
          <ToolButton>
            <CircleStop size={8} strokeWidth={3} />
            Stop updates
          </ToolButton>
          <StripDivider $color="#e3e4e6" />
          <ToolButton>
            <History size={8} strokeWidth={3} />
            View table history
          </ToolButton>
          <IconButton aria-label="Refresh" $width={9}>
            <RefreshCw size={8} strokeWidth={3} color="#2c9466" />
          </IconButton>
          <IconButton aria-label="Expand" $width={9}>
            <SplitRowsIcon />
          </IconButton>
        </SheetStatus>
      </SheetBar>
      <WindowsTaskbar />
      <Recorder />
      <Pointer>
        <PointerIcon />
      </Pointer>
    </Page>
  );
}

export default App;
